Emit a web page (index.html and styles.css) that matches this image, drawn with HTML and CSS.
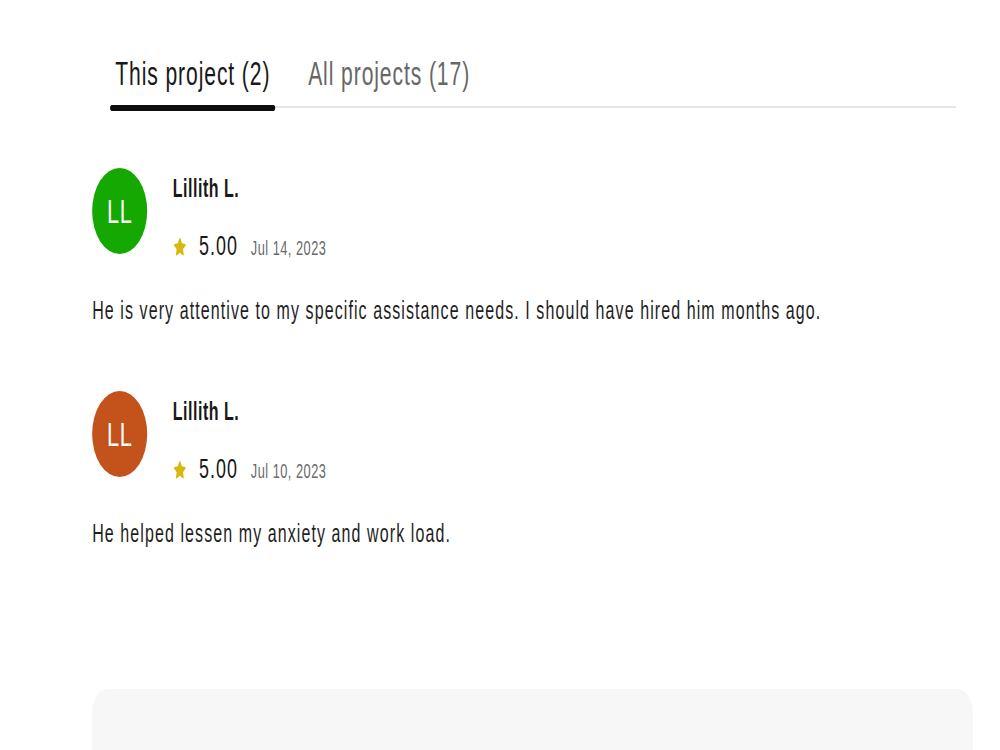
FILE: index.html
```html
<!DOCTYPE html>
<html lang="en">
<head>
<meta charset="utf-8">
<title>Reviews</title>
<link rel="stylesheet" href="styles.css">
</head>
<body>
<div class="page">
  <div class="content">
    <nav class="tabs">
      <div class="tab tab-active">This project (2)</div>
      <div class="tab">All projects (17)</div>
    </nav>

    <section class="reviews">
      <article class="review">
        <div class="review-head">
          <div class="avatar avatar-green">LL</div>
          <div class="review-info">
            <div class="reviewer">Lillith L.</div>
            <div class="rating-row">
              <svg class="star" viewBox="0 0 24 24" aria-hidden="true"><path d="M12 2.2c.5 0 .9.3 1.1.7l2.3 5.1 5.5.6c1 .1 1.4 1.3.6 2l-4.1 3.8 1.2 5.5c.2 1-.8 1.7-1.7 1.2L12 18.3l-4.9 2.8c-.9.5-1.9-.2-1.7-1.2l1.2-5.5-4.1-3.8c-.8-.7-.4-1.9.6-2l5.5-.6 2.3-5.1c.2-.4.6-.7 1.1-.7z"/></svg>
              <span class="score">5.00</span>
              <span class="date">Jul 14, 2023</span>
            </div>
          </div>
        </div>
        <p class="review-text">He is very attentive to my specific assistance needs. I should have hired him months ago.</p>
      </article>

      <article class="review">
        <div class="review-head">
          <div class="avatar avatar-orange">LL</div>
          <div class="review-info">
            <div class="reviewer">Lillith L.</div>
            <div class="rating-row">
              <svg class="star" viewBox="0 0 24 24" aria-hidden="true"><path d="M12 2.2c.5 0 .9.3 1.1.7l2.3 5.1 5.5.6c1 .1 1.4 1.3.6 2l-4.1 3.8 1.2 5.5c.2 1-.8 1.7-1.7 1.2L12 18.3l-4.9 2.8c-.9.5-1.9-.2-1.7-1.2l1.2-5.5-4.1-3.8c-.8-.7-.4-1.9.6-2l5.5-.6 2.3-5.1c.2-.4.6-.7 1.1-.7z"/></svg>
              <span class="score">5.00</span>
              <span class="date">Jul 10, 2023</span>
            </div>
          </div>
        </div>
        <p class="review-text">He helped lessen my anxiety and work load.</p>
      </article>
    </section>

    <div class="panel"></div>
  </div>
</div>
</body>
</html>
```

FILE: styles.css
```css
html, body {
  margin: 0;
  padding: 0;
  background: #ffffff;
  overflow: hidden;
}

body {
  font-family: "Liberation Sans", Arial, Helvetica, sans-serif;
  color: #181818;
  width: 1000px;
  height: 750px;
}

/* The whole sheet is drawn wide and compressed horizontally */
.page {
  width: 1562px;
  transform: scaleX(0.64);
  transform-origin: 0 0;
}

.content {
  padding: 55px 42px 0 144px;
}

/* Tabs */
.tabs {
  display: flex;
  gap: 43px;
  margin: 0 26px 0 28px;
  border-bottom: 2px solid #e6e6e6;
}

.tab {
  position: relative;
  padding: 0 8px 13px;
  font-size: 33px;
  line-height: 38px;
  color: #676767;
  letter-spacing: 1.4px;
}

.tab-active {
  color: #181818;
}

.tab-active::after {
  content: "";
  position: absolute;
  left: 0;
  right: 0;
  bottom: -5px;
  height: 6px;
  border-radius: 3px;
  background: #0d0d0d;
}

/* Reviews */
.reviews {
  margin-top: 60px;
  display: flex;
  flex-direction: column;
  gap: 65px;
}

.review-head {
  display: flex;
  gap: 40px;
}

.avatar {
  width: 86px;
  height: 86px;
  border-radius: 50%;
  flex: none;
  display: flex;
  align-items: center;
  justify-content: center;
  color: #ffffff;
  font-size: 34px;
  letter-spacing: 1px;
}

.avatar-green { background: #14a800; }
.avatar-orange { background: #c4531b; }

.review-info {
  display: flex;
  flex-direction: column;
  padding-top: 5px;
}

.reviewer {
  font-size: 25px;
  line-height: 30px;
  font-weight: 700;
  letter-spacing: 0.8px;
}

.rating-row {
  margin-top: 27px;
  display: flex;
  align-items: baseline;
  line-height: 32px;
}

.star {
  width: 22px;
  height: 24px;
  fill: #d6b90a;
  margin-right: 19px;
  align-self: center;
}

.score {
  font-size: 28px;
  letter-spacing: 1.6px;
  margin-right: 20px;
}

.date {
  font-size: 20px;
  color: #6a6a6a;
  letter-spacing: 0.75px;
}

.review-text {
  margin: 30px 0 0;
  font-size: 25px;
  line-height: 32px;
  color: #1e1e1e;
  letter-spacing: 1.7px;
}

/* Card below the review list */
.panel {
  margin-top: 140px;
  height: 200px;
  border-radius: 24px;
  background: #f7f7f7;
}
```
